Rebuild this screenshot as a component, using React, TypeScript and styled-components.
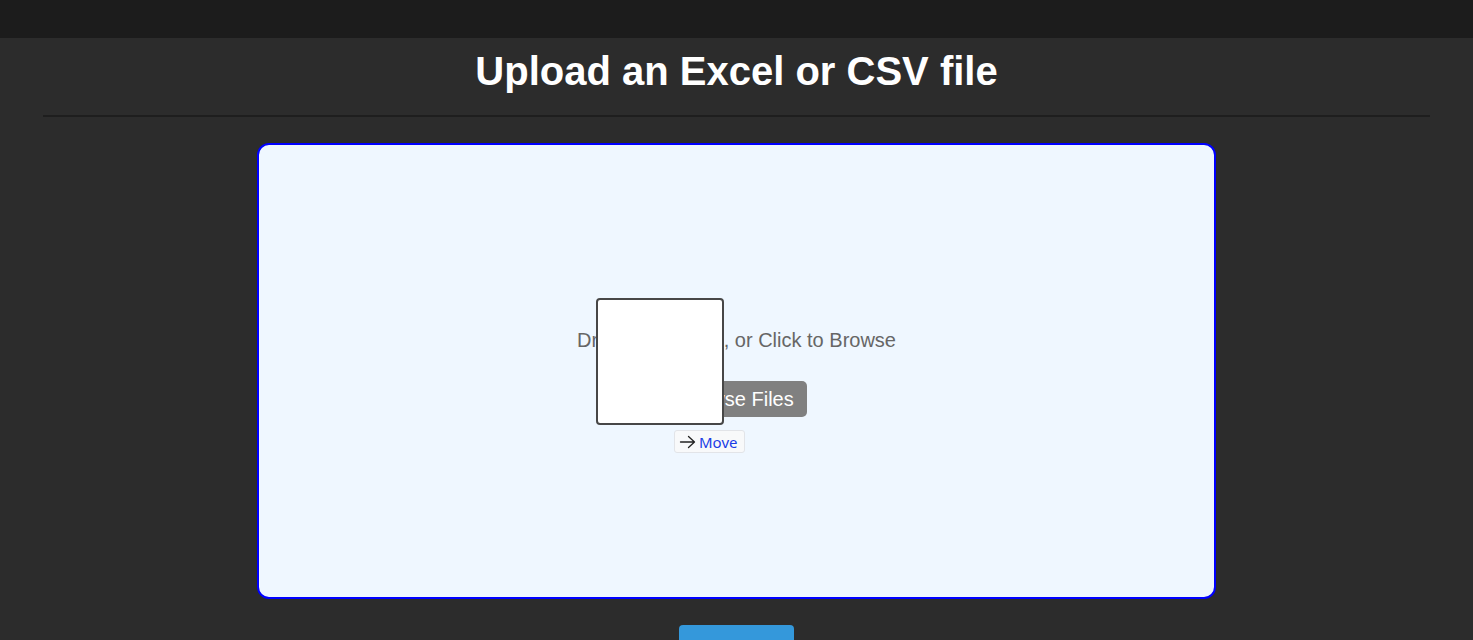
import React from "react";
import styled, { createGlobalStyle } from "styled-components";

const Global = createGlobalStyle`
  html, body { margin: 0; padding: 0; background: #2c2c2c; }
  body { font-family: "Liberation Sans", Arial, sans-serif; overflow: hidden; }
`;

const Page = styled.div`
  min-height: 640px;
  display: flex;
  flex-direction: column;
`;

const TopBar = styled.header`
  height: 38px;
  background: #1c1c1c;
  flex-shrink: 0;
`;

const Main = styled.main`
  display: flex;
  flex-direction: column;
  align-items: center;
  padding: 0 43px;
`;

const Title = styled.h1`
  margin: 10px 0 0;
  height: 46px;
  line-height: 46px;
  font-size: 40px;
  font-weight: 700;
  color: #ffffff;
  text-align: center;
`;

const Divider = styled.hr`
  align-self: stretch;
  margin: 21px 0 0;
  border: none;
  height: 2px;
  background: #1e1e1e;
`;

const DropZone = styled.div`
  position: relative;
  box-sizing: border-box;
  margin-top: 26px;
  width: 959px;
  height: 456px;
  background: #eff7ff;
  border: 2px solid #0000ff;
  border-radius: 12px;
  display: flex;
  flex-direction: column;
  align-items: center;
  justify-content: center;
  gap: 29px;
  padding-top: 4px;
`;

const DropText = styled.p`
  margin: 0;
  font-size: 20px;
  line-height: 23px;
  color: #666666;
`;

const BrowseButton = styled.button`
  font-family: "Liberation Sans", Arial, sans-serif;
  font-size: 20px;
  line-height: 24px;
  padding: 6px 13px;
  color: #ffffff;
  background: #808080;
  border: none;
  border-radius: 5px;
`;

const Overlay = styled.div`
  position: absolute;
  left: 337px;
  top: 153px;
  width: 128px;
  height: 127px;
  box-sizing: border-box;
  background: #ffffff;
  border: 2px solid #474747;
  border-radius: 4px;
`;

const MoveChip = styled.div`
  position: absolute;
  left: 415px;
  top: 285px;
  height: 23px;
  box-sizing: border-box;
  padding: 0 7px 0 4px;
  display: flex;
  align-items: center;
  gap: 3px;
  background: #f8f9fa;
  border: 1px solid #e2e4e8;
  border-radius: 3px;
  font-family: "Noto Sans", "Open Sans", sans-serif;
  font-size: 15px;
  color: #1a3ce6;
`;

const UploadButton = styled.button`
  margin-top: 26px;
  font-family: "Liberation Sans", Arial, sans-serif;
  font-size: 16px;
  padding: 13px 32px;
  color: #ffffff;
  background: #3498db;
  border: none;
  border-radius: 4px;
`;

const Arrow = () => (
  <svg width="17" height="14" viewBox="0 0 17 14" fill="none" stroke="#222" strokeWidth="1.3" strokeLinecap="round" strokeLinejoin="round">
    <path d="M1.5 7h14M9.5 1.5L15.5 7l-6 5.5" />
  </svg>
);

export default function App() {
  return (
    <Page>
      <Global />
      <TopBar />
      <Main>
        <Title>Upload an Excel or CSV file</Title>
        <Divider />
        <DropZone>
          <DropText>Drop a File Here, or Click to Browse</DropText>
          <BrowseButton>Browse Files</BrowseButton>
          <Overlay />
          <MoveChip>
            <Arrow />
            Move
          </MoveChip>
        </DropZone>
        <UploadButton>Upload</UploadButton>
      </Main>
    </Page>
  );
}
